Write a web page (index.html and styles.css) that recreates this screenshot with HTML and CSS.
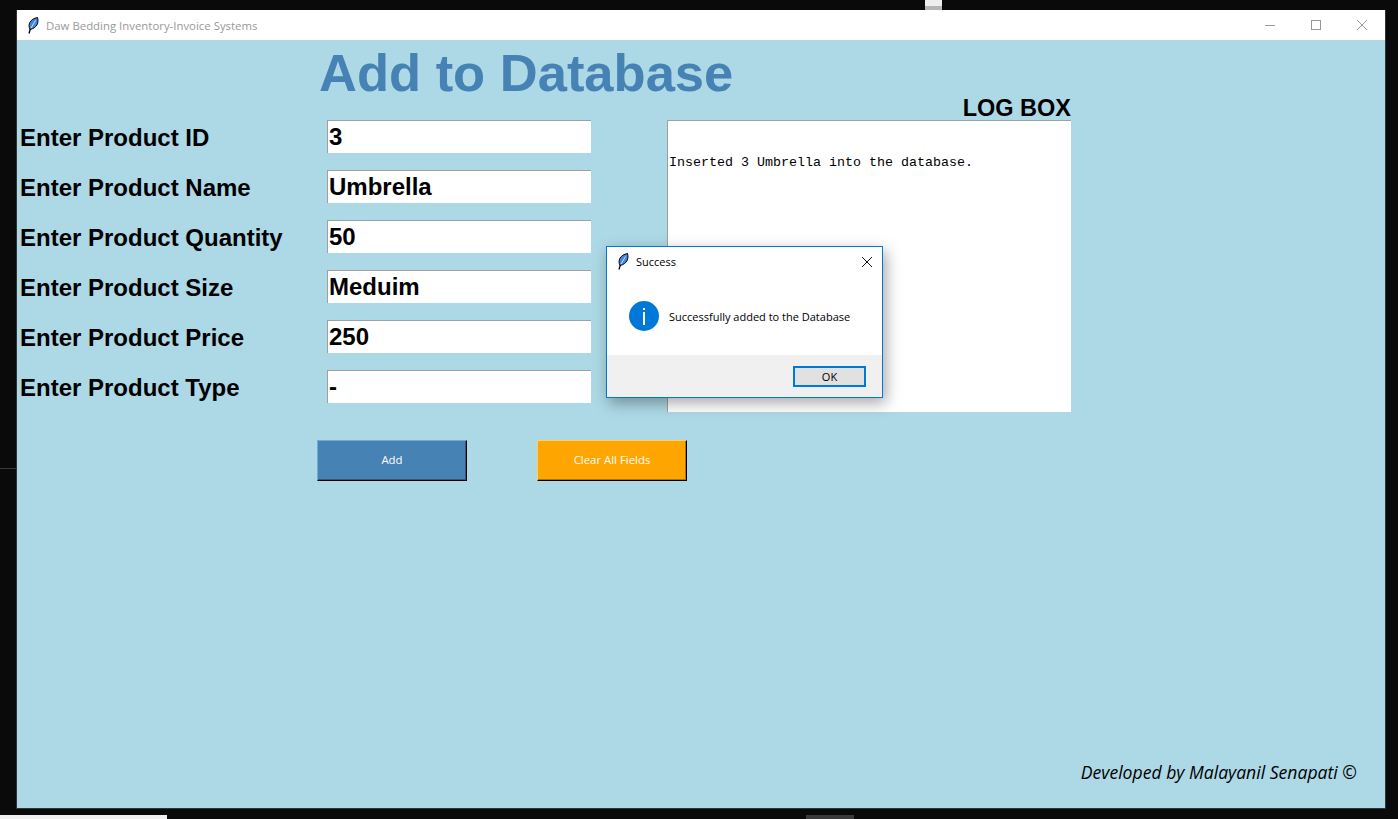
FILE: index.html
```html
<!DOCTYPE html>
<html lang="en">
<head>
    <meta charset="UTF-8">
    <title>Daw Bedding Inventory-Invoice Systems</title>
    <link rel="stylesheet" href="styles.css">
</head>
<body>
<div class="desktop">
    <span class="peek-top"></span>
    <span class="peek-left"></span>
    <span class="peek-bottom"></span>
    <span class="peek-task"></span>

    <div class="window">
        <div class="titlebar">
            <svg class="feather" width="12" height="17" viewBox="0 0 12 17">
                <path d="M2 16.5 L3.5 11.5" stroke="#000" stroke-width="1.3" fill="none"/>
                <path d="M3 12.5 C0.5 7.5 3 2 10.5 0.5 C12 5.5 10 11 3 12.5 Z" fill="#3f86e0" stroke="#000" stroke-width="1"/>
                <path d="M4 11 L8.5 3.5" stroke="#cfe2f8" stroke-width="1" fill="none"/>
            </svg>
            <span class="titlebar-text">Daw Bedding Inventory-Invoice Systems</span>
            <div class="win-controls">
                <svg width="12" height="12" viewBox="0 0 12 12"><path d="M1 6.5 H11" stroke="#999" fill="none"/></svg>
                <svg width="12" height="12" viewBox="0 0 12 12"><rect x="1.5" y="1.5" width="9" height="9" stroke="#999" fill="none"/></svg>
                <svg width="12" height="12" viewBox="0 0 12 12"><path d="M1 1 L11 11 M11 1 L1 11" stroke="#999" fill="none"/></svg>
            </div>
        </div>

        <div class="canvas">
            <h1 class="heading">Add to Database</h1>

            <div class="workspace">
                <div class="form">
                    <label class="field-label">Enter Product ID</label>
                    <input class="field" type="text" value="3">
                    <label class="field-label">Enter Product Name</label>
                    <input class="field" type="text" value="Umbrella">
                    <label class="field-label">Enter Product Quantity</label>
                    <input class="field" type="text" value="50">
                    <label class="field-label">Enter Product Size</label>
                    <input class="field" type="text" value="Meduim">
                    <label class="field-label">Enter Product Price</label>
                    <input class="field" type="text" value="250">
                    <label class="field-label">Enter Product Type</label>
                    <input class="field" type="text" value="-">
                </div>
                <div class="log">
                    <div class="log-title">LOG BOX</div>
                    <div class="log-box">Inserted 3 Umbrella into the database.</div>
                </div>
            </div>

            <div class="actions">
                <button class="btn btn-add">Add</button>
                <button class="btn btn-clear">Clear All Fields</button>
            </div>

            <div class="credit">Developed by Malayanil Senapati ©</div>

            <div class="dialog">
                <div class="dialog-title">
                    <svg class="feather" width="12" height="17" viewBox="0 0 12 17">
                        <path d="M2 16.5 L3.5 11.5" stroke="#000" stroke-width="1.3" fill="none"/>
                        <path d="M3 12.5 C0.5 7.5 3 2 10.5 0.5 C12 5.5 10 11 3 12.5 Z" fill="#3f86e0" stroke="#000" stroke-width="1"/>
                        <path d="M4 11 L8.5 3.5" stroke="#cfe2f8" stroke-width="1" fill="none"/>
                    </svg>
                    <span class="dialog-caption">Success</span>
                    <svg class="dialog-close" width="12" height="12" viewBox="0 0 12 12"><path d="M1 1 L11 11 M11 1 L1 11" stroke="#111" fill="none"/></svg>
                </div>
                <div class="dialog-body">
                    <svg width="30" height="30" viewBox="0 0 30 30">
                        <circle cx="15" cy="15" r="15" fill="#0078d7"/>
                        <rect x="14" y="7" width="2" height="2" fill="#fff"/>
                        <rect x="14" y="11" width="2" height="13" fill="#fff"/>
                    </svg>
                    <span class="dialog-msg">Successfully added to the Database</span>
                </div>
                <div class="dialog-foot">
                    <button class="dialog-ok">OK</button>
                </div>
            </div>
        </div>
    </div>
</div>
</body>
</html>
```

FILE: styles.css
```css
* {
    margin: 0;
    padding: 0;
    box-sizing: border-box;
}

body {
    background-color: #0a0a0a;
    width: 1398px;
    height: 819px;
    overflow: hidden;
}

.desktop {
    position: relative;
    width: 1398px;
    height: 819px;
    padding: 10px 12px 10px 16px;
}

/* bits of other windows showing behind */
.peek-top {
    position: absolute;
    left: 925px;
    top: 0;
    width: 17px;
    height: 10px;
    background: linear-gradient(#eeeeee 60%, #b5b5b5 60%);
}

.peek-left {
    position: absolute;
    left: 0;
    top: 468px;
    width: 16px;
    height: 1px;
    background-color: #3a3a3a;
}

.peek-bottom {
    position: absolute;
    left: 0;
    top: 815px;
    width: 167px;
    height: 4px;
    background-color: #f0f0f0;
}

.peek-task {
    position: absolute;
    left: 806px;
    top: 815px;
    width: 48px;
    height: 4px;
    background-color: #3a3a3a;
}

.window {
    width: 1370px;
    height: 799px;
    display: flex;
    flex-direction: column;
    border: 1px solid #333;
    border-top: 0;
}

.titlebar {
    height: 30px;
    background-color: #fff;
    display: flex;
    align-items: center;
    padding-left: 10px;
    flex-shrink: 0;
}

.titlebar-text {
    margin-left: 7px;
    font-family: "Open Sans", "Noto Sans", sans-serif;
    font-size: 11.4px;
    color: #999;
}

.win-controls {
    margin-left: auto;
    display: flex;
    gap: 34px;
    padding-right: 17px;
}

.canvas {
    position: relative;
    flex: 1;
    background-color: #add8e6;
    display: flex;
    flex-direction: column;
    font-family: "Liberation Sans", Arial, sans-serif;
}

.heading {
    height: 56px;
    padding-left: 302px;
    font-size: 52.5px;
    line-height: 66px;
    color: #4682b4;
    white-space: nowrap;
}

.workspace {
    display: flex;
    height: 316px;
}

.form {
    width: 650px;
    padding-top: 24px;
    padding-left: 3px;
    display: grid;
    grid-template-columns: 307px 264px;
    grid-auto-rows: 33px;
    row-gap: 17px;
}

.field-label {
    font-size: 24px;
    font-weight: bold;
    line-height: 36px;
    color: #000;
    white-space: nowrap;
}

.field {
    width: 264px;
    height: 33px;
    border: 0;
    border-top: 1px solid #a0a0a0;
    border-left: 1px solid #a0a0a0;
    background-color: #fff;
    padding-left: 1px;
    font-family: "Liberation Sans", Arial, sans-serif;
    font-size: 24px;
    font-weight: bold;
    color: #000;
    outline: none;
}

.log {
    width: 404px;
}

.log-title {
    height: 24px;
    text-align: right;
    font-size: 23.5px;
    font-weight: bold;
    line-height: 24px;
    color: #000;
}

.log-box {
    height: 292px;
    background-color: #fff;
    border-top: 1px solid #a0a0a0;
    border-left: 1px solid #a0a0a0;
    padding: 34px 0 0 1px;
    font-family: "Liberation Mono", "Courier New", monospace;
    font-size: 13.33px;
    line-height: 16px;
    color: #000;
}

.actions {
    display: flex;
    gap: 70px;
    margin-top: 28px;
    padding-left: 300px;
}

.btn {
    width: 150px;
    height: 41px;
    border: 1px solid;
    padding-bottom: 2px;
    box-shadow: inset -1px -1px 0 rgba(0, 0, 0, 0.3);
    font-family: "Open Sans", "Noto Sans", sans-serif;
    font-size: 11.4px;
    color: #fff;
}

.btn-add {
    background-color: #4682b4;
    border-color: #7aa6e0 #000 #000 #7aa6e0;
}

.btn-clear {
    background-color: #ffa500;
    border-color: #ffd060 #000 #000 #ffd060;
}

.credit {
    margin-top: auto;
    padding: 0 28px 24px 0;
    text-align: right;
    font-family: "Open Sans", "Noto Sans", sans-serif;
    font-style: italic;
    font-size: 17.6px;
    line-height: 24px;
    color: #000;
}

/* message box sits over the main window */
.dialog {
    position: absolute;
    left: 589px;
    top: 206px;
    width: 277px;
    height: 152px;
    background-color: #fff;
    border: 1px solid #0078d7;
    box-shadow: 3px 5px 14px rgba(0, 0, 0, 0.35);
    display: flex;
    flex-direction: column;
    font-family: "Open Sans", "Noto Sans", sans-serif;
    font-size: 11px;
    color: #000;
}

.dialog-title {
    height: 29px;
    display: flex;
    align-items: center;
    padding: 0 9px 0 10px;
}

.dialog-caption {
    margin-left: 7px;
}

.dialog-close {
    margin-left: auto;
}

.dialog-body {
    flex: 1;
    display: flex;
    align-items: center;
    padding-left: 22px;
    gap: 10px;
}

.dialog-msg {
    padding-top: 2px;
}

.dialog-foot {
    height: 42px;
    background-color: #f0f0f0;
    display: flex;
    justify-content: flex-end;
    align-items: center;
    padding-right: 16px;
}

.dialog-ok {
    width: 73px;
    height: 21px;
    border: 2px solid #0078d7;
    background-color: #e1e1e1;
    font-family: "Open Sans", "Noto Sans", sans-serif;
    font-size: 11px;
    color: #000;
}
```
